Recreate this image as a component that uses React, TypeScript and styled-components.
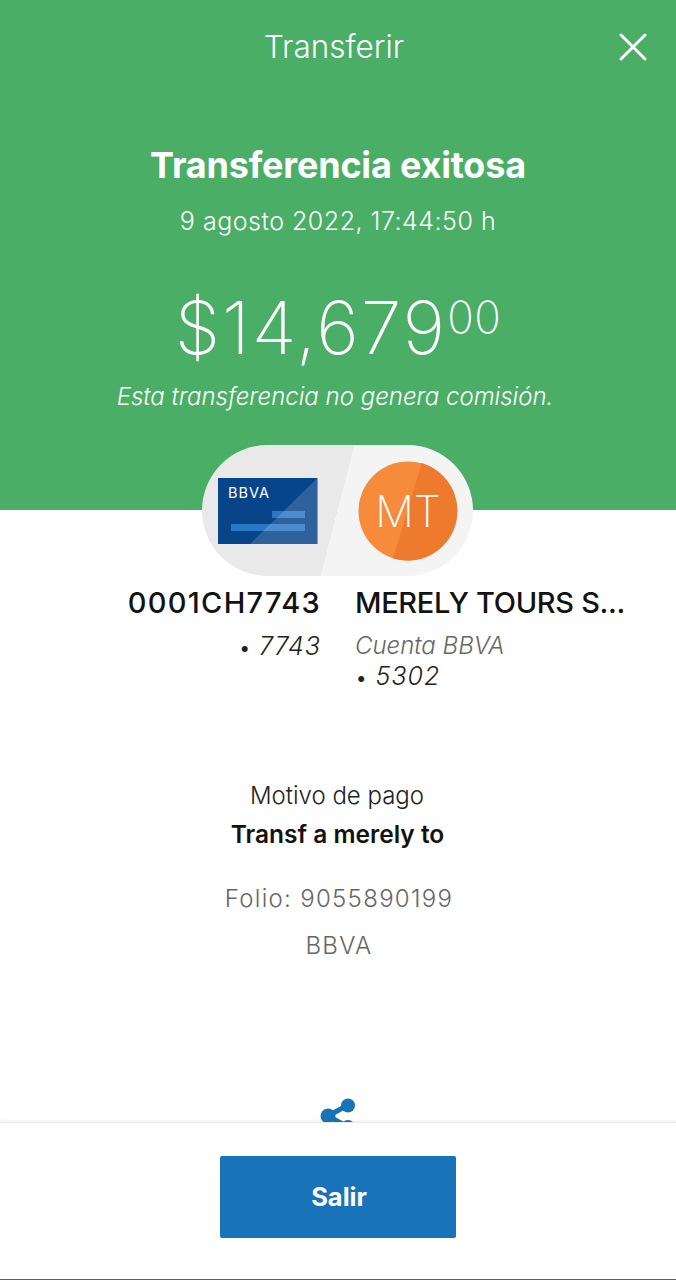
import React from "react";
import styled, { createGlobalStyle } from "styled-components";

const Global = createGlobalStyle`
  html, body { margin: 0; padding: 0; background: #fff; }
  body { font-family: "Inter", "Liberation Sans", sans-serif; }
`;
const Page = styled.div`
  width: 676px; height: 1280px; display: flex; flex-direction: column; overflow: hidden; background: #fff;
`;
const Scroll = styled.main`
  flex: 1; min-height: 0; overflow: hidden; display: flex; flex-direction: column; align-items: center;
`;
const Hero = styled.section`
  width: 100%; height: 510px; flex: none; background: #4aae66; color: #fff;
  display: flex; flex-direction: column; align-items: center; position: relative;
`;
const TopTitle = styled.h1`
  margin: 27px 0 0; font-size: 31.500px; line-height: 40px; font-weight: 300; padding-right: 8px;
`;
const Close = styled.button`
  position: absolute; top: 32px; right: 28px; width: 30px; height: 30px; padding: 0; border: 0; background: none;
  svg { display: block; }
`;
const Heading = styled.h2`
  margin: 76px 0 0; font-size: 36px; line-height: 44px; font-weight: 700; letter-spacing: -0.2px;
`;
const Stamp = styled.p`
  margin: 18px 0 0; font-size: 25px; line-height: 32px; font-weight: 300; letter-spacing: 0.5px;
`;
const Amount = styled.p`
  margin: 47px 0 0; font-size: 73px; line-height: 88px; font-weight: 200; letter-spacing: 2px; display: flex; align-items: flex-start;
`;
const Cents = styled.span`
  font-size: 44px; line-height: 50px; margin-top: 8px; letter-spacing: 0.5px;
`;
const Note = styled.p`
  margin: 9px 0 0; font-size: 24px; line-height: 32px; font-weight: 300; font-style: italic; padding-right: 6px;
`;
const Pill = styled.div`
  flex: none; width: 271px; height: 131px; margin: -65px 0 0 -1px; border-radius: 66px; position: relative;
  background: linear-gradient(104.5deg, #e9e9e9 50%, #f4f4f4 50%);
  display: flex; align-items: center; justify-content: space-between; padding: 0 15px 0 16px; box-sizing: border-box;
  svg { display: block; }
`;
const Accounts = styled.section`
  width: 100%; display: grid; grid-template-columns: 321px 275px; column-gap: 34px; margin-top: 9px;
`;
const Account = styled.div<{ $right?: boolean }>`
  text-align: ${p => (p.$right ? "right" : "left")};
`;
const AccountName = styled.div<{ $spacing: number }>`
  font-size: 29px; line-height: 36px; font-weight: 500; color: #121212; white-space: nowrap;
  letter-spacing: ${p => p.$spacing}px;
`;
const AccountBank = styled.div`
  margin-top: 10px; font-size: 24px; line-height: 30px; font-weight: 300; font-style: italic; color: #666;
`;
const AccountNumber = styled.div<{ $tight?: boolean }>`
  margin-top: ${p => (p.$tight ? "0" : "10px")}; font-size: 25px; line-height: 30px; font-weight: 300; font-style: italic;
  letter-spacing: 1px; color: #222;
`;
const Bullet = styled.span`
  font-style: normal; font-size: 22px; letter-spacing: 0;
`;
const Reason = styled.p`
  margin: 89px 0 0; font-size: 24px; line-height: 30px; font-weight: 300; color: #222; padding-right: 2px;
`;
const ReasonValue = styled.p`
  margin: 8px 0 0; font-size: 24.500px; line-height: 30px; font-weight: 600; color: #121212; padding-right: 1px;
`;
const Meta = styled.p<{ $gap: number }>`
  margin: ${p => p.$gap}px 0 0; font-size: 24px; line-height: 30px; font-weight: 300; color: #666;
  letter-spacing: 1.300px; padding-left: 2px;
`;
const Share = styled.button`
  margin-top: 135px; flex: none; padding: 0; border: 0; background: none;
  svg { display: block; }
`;
const Footer = styled.footer`
  flex: none; height: 158px; box-sizing: border-box; background: #fff; position: relative;
  border-top: 1px solid #eaeaea; border-bottom: 1px solid #2c6f97; box-shadow: 0 -1px 3px rgba(0, 0, 0, 0.08);
  display: flex; justify-content: center; padding-top: 33px;
`;
const ExitButton = styled.button`
  width: 236px; height: 82px; border: 0; border-radius: 2px; background: #1973b8; color: #fff;
  font: 700 25.500px/30px "Inter", "Liberation Sans", sans-serif; padding: 0 0 0 2px;
`;

export default function App() {
  return (
    <Page>
      <Global />
      <Scroll>
        <Hero>
          <TopTitle>Transferir</TopTitle>
          <Close aria-label="Cerrar">
            <svg width="30" height="30" viewBox="0 0 30 30"><path d="M3 3 L27 27 M27 3 L3 27" stroke="#fff" strokeWidth="3" strokeLinecap="round" /></svg>
          </Close>
          <Heading>Transferencia exitosa</Heading>
          <Stamp>9 agosto 2022, 17:44:50 h</Stamp>
          <Amount>$14,679<Cents>00</Cents></Amount>
          <Note>Esta transferencia no genera comisión.</Note>
        </Hero>
        <Pill>
          <svg width="100" height="66" viewBox="0 0 100 66">
            <rect width="99.500" height="66" fill="#084489" />
            <path d="M54 33 H87 V40 H54 Z M13 46 H87 V53 H13 Z" fill="#2a78c4" />
            <path d="M32 66 L99.500 0 V66 Z" fill="#fff" fillOpacity="0.16" />
            <text x="10" y="20" fontFamily="Inter, sans-serif" fontWeight="400" fontSize="14.500" letterSpacing="1" fill="#fff">BBVA</text>
          </svg>
          <svg width="100" height="100" viewBox="0 0 100 100">
            <circle cx="50" cy="50" r="49.500" fill="#f78b3c" />
            <path d="M63.700 2 A49.500 49.500 0 0 1 35 97.500 Z" fill="#ee7a2e" />
            <text x="50" y="66" textAnchor="middle" fontFamily="Inter, sans-serif" fontWeight="250" fontSize="43" fill="#fff">MT</text>
          </svg>
        </Pill>
        <Accounts>
          <Account $right>
            <AccountName $spacing={1.3}>0001CH7743</AccountName>
            <AccountNumber><Bullet>•</Bullet> 7743</AccountNumber>
          </Account>
          <Account>
            <AccountName $spacing={-0.3}>MERELY TOURS S...</AccountName>
            <AccountBank>Cuenta BBVA</AccountBank>
            <AccountNumber $tight><Bullet>•</Bullet> 5302</AccountNumber>
          </Account>
        </Accounts>
        <Reason>Motivo de pago</Reason>
        <ReasonValue>Transf a merely to</ReasonValue>
        <Meta $gap={35}>Folio: 9055890199</Meta>
        <Meta $gap={17}>BBVA</Meta>
        <Share aria-label="Compartir">
          <svg width="36" height="40" viewBox="0 0 36 40">
            <path d="M8 20 L28 9 M8 20 L28 31" stroke="#1973b8" strokeWidth="5" />
            <circle cx="28" cy="9.500" r="7" fill="#1973b8" />
            <circle cx="8" cy="20" r="7.500" fill="#1973b8" />
            <circle cx="28" cy="31" r="7" fill="#1973b8" />
          </svg>
        </Share>
      </Scroll>
      <Footer>
        <ExitButton>Salir</ExitButton>
      </Footer>
    </Page>
  );
}
